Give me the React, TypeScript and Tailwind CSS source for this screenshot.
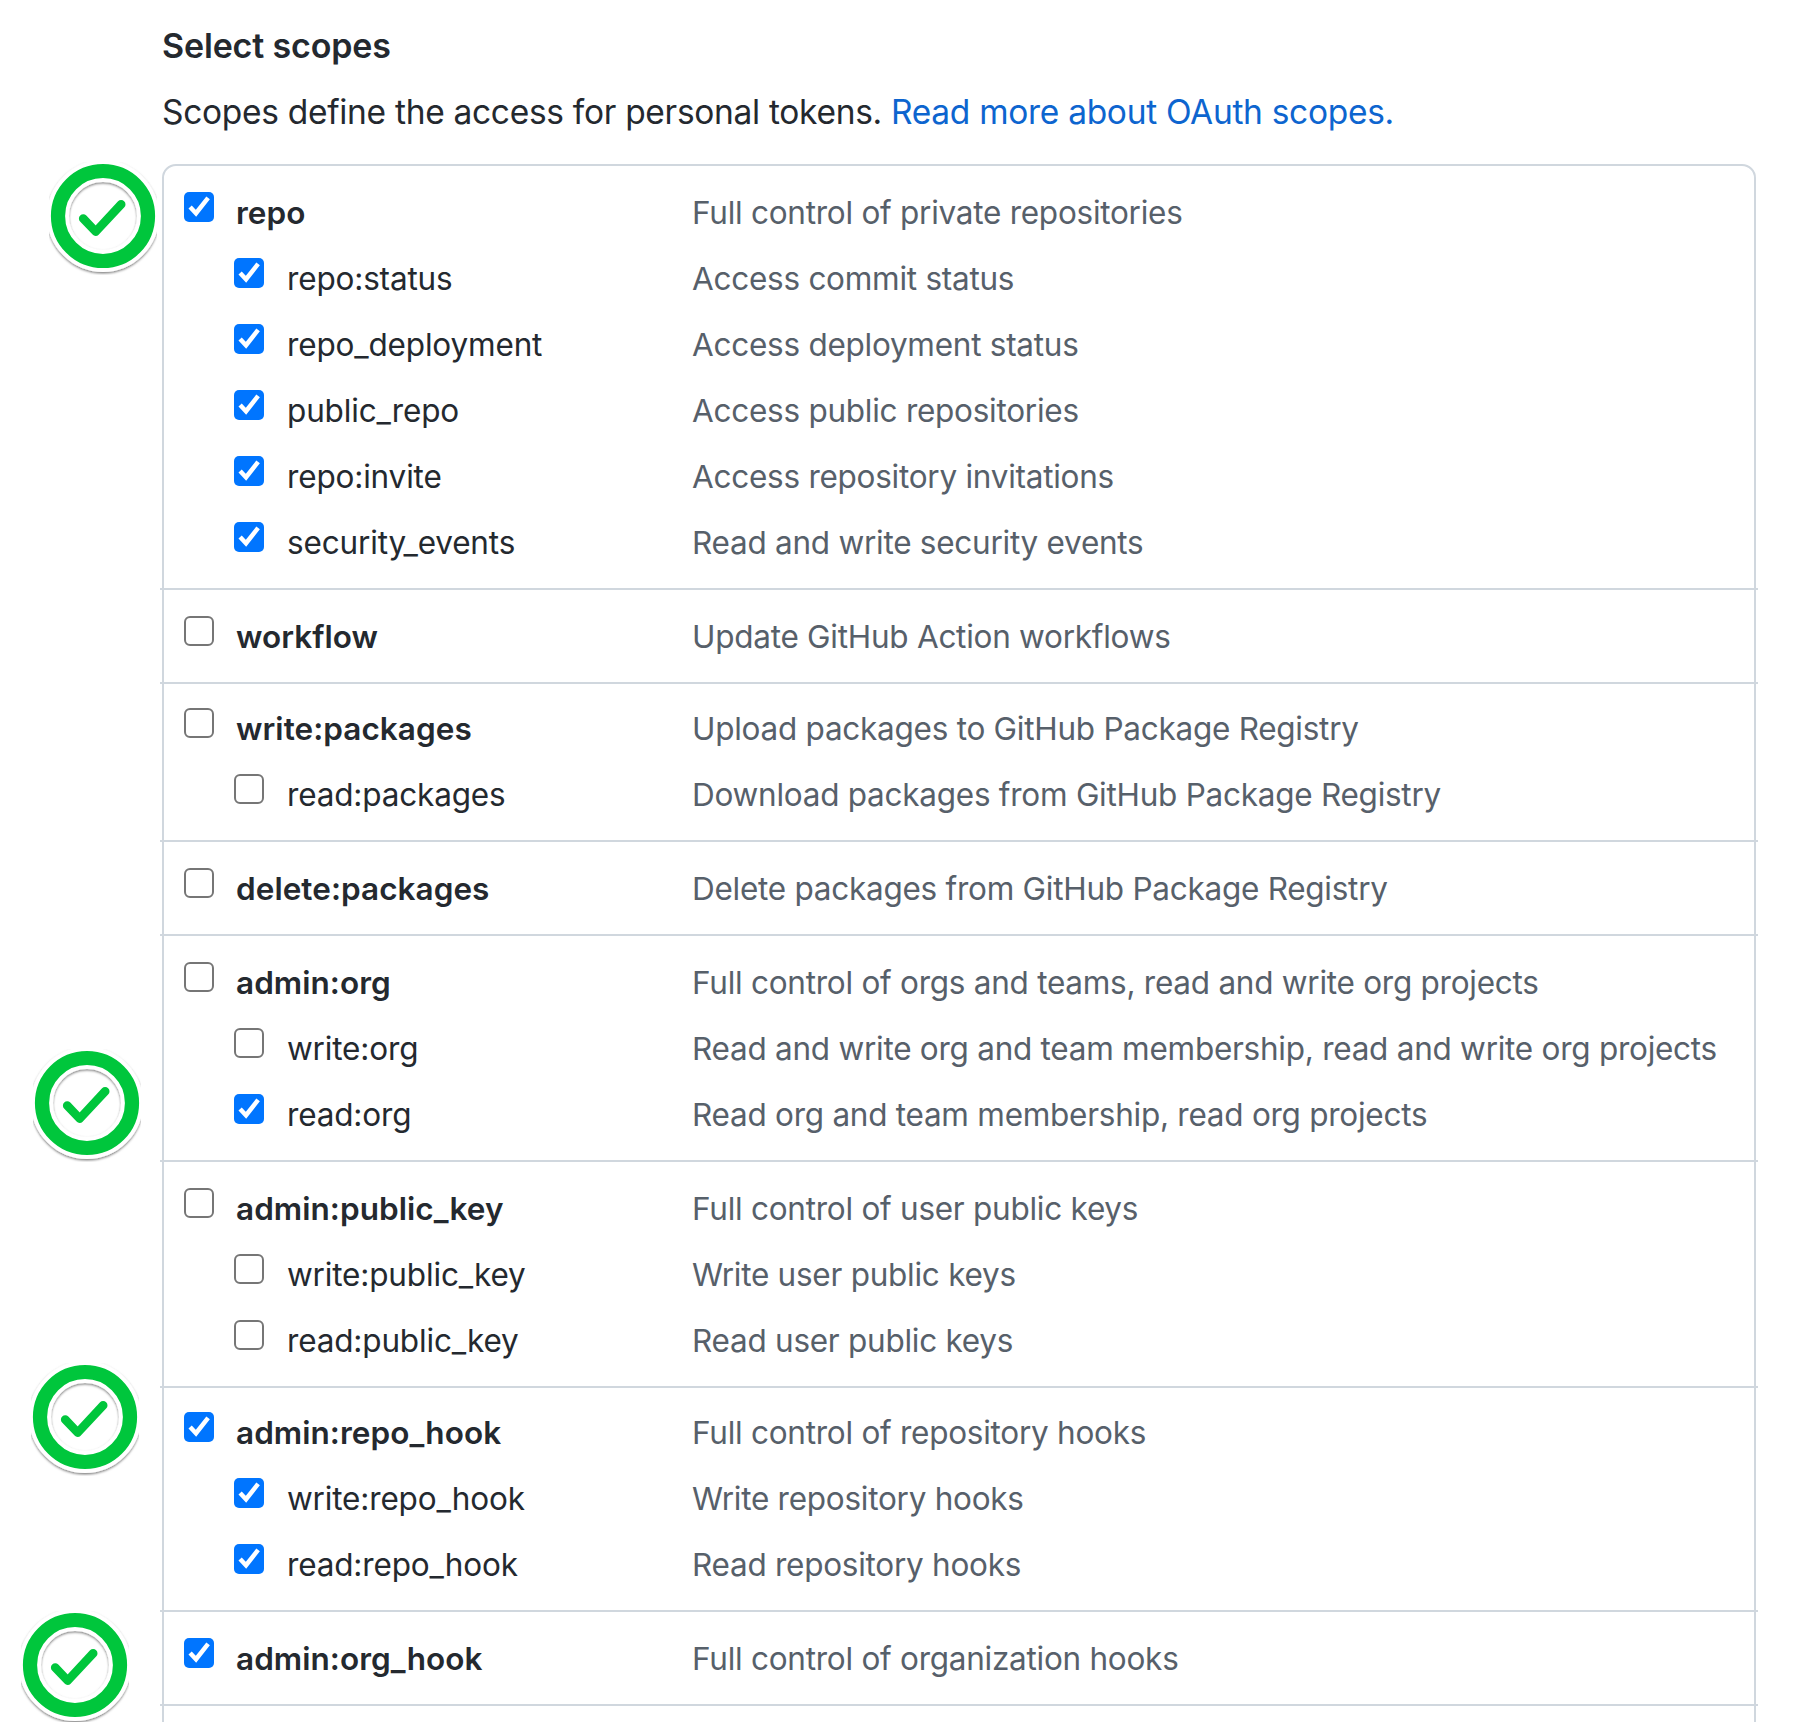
type Scope = { name: string; description: string; checked?: boolean };
type Group = { scopes: Scope[]; tight?: boolean };

const groups: Group[] = [
  {
    scopes: [
      { name: "repo", description: "Full control of private repositories", checked: true },
      { name: "repo:status", description: "Access commit status", checked: true },
      { name: "repo_deployment", description: "Access deployment status", checked: true },
      { name: "public_repo", description: "Access public repositories", checked: true },
      { name: "repo:invite", description: "Access repository invitations", checked: true },
      { name: "security_events", description: "Read and write security events", checked: true },
    ],
  },
  { scopes: [{ name: "workflow", description: "Update GitHub Action workflows" }] },
  {
    tight: true,
    scopes: [
      { name: "write:packages", description: "Upload packages to GitHub Package Registry" },
      { name: "read:packages", description: "Download packages from GitHub Package Registry" },
    ],
  },
  { scopes: [{ name: "delete:packages", description: "Delete packages from GitHub Package Registry" }] },
  {
    scopes: [
      { name: "admin:org", description: "Full control of orgs and teams, read and write org projects" },
      { name: "write:org", description: "Read and write org and team membership, read and write org projects" },
      { name: "read:org", description: "Read org and team membership, read org projects", checked: true },
    ],
  },
  {
    scopes: [
      { name: "admin:public_key", description: "Full control of user public keys" },
      { name: "write:public_key", description: "Write user public keys" },
      { name: "read:public_key", description: "Read user public keys" },
    ],
  },
  {
    tight: true,
    scopes: [
      { name: "admin:repo_hook", description: "Full control of repository hooks", checked: true },
      { name: "write:repo_hook", description: "Write repository hooks", checked: true },
      { name: "read:repo_hook", description: "Read repository hooks", checked: true },
    ],
  },
  { scopes: [{ name: "admin:org_hook", description: "Full control of organization hooks", checked: true }] },
];

function Checkbox({ checked }: { checked?: boolean }) {
  if (!checked) {
    return <span className="size-[30px] shrink-0 rounded-[6px] border-2 border-[#767676] bg-white" />;
  }
  return (
    <span className="size-[30px] shrink-0 rounded-[5px] bg-[#0075ff]">
      <svg viewBox="0 0 30 30" className="size-full" fill="none" stroke="#fff" strokeWidth="4.5">
        <path d="M6.1 15 12 21.2 24.1 5.9" />
      </svg>
    </span>
  );
}

function ScopeRow({ scope, parent }: { scope: Scope; parent: boolean }) {
  return (
    <label className="flex h-[66px] items-start leading-[42px]">
      <span className={parent ? "flex w-[508px] pl-0" : "flex w-[508px] pl-[50px]"}>
        <Checkbox checked={scope.checked} />
        <span className={parent ? "ml-[22px] font-semibold tracking-[0.05px]" : "ml-[23px] tracking-[-0.16px]"}>
          {scope.name}
        </span>
      </span>
      <span className="tracking-[-0.26px] whitespace-nowrap text-[#57606a]">{scope.description}</span>
    </label>
  );
}

function Badge({ className }: { className: string }) {
  return (
    <svg viewBox="0 0 120 124" className={`absolute h-[124px] w-[120px] ${className}`} fill="none">
      <defs>
        <filter id="badge-shadow" x="-10%" y="-10%" width="120%" height="125%">
          <feDropShadow dx="0" dy="1.4" stdDeviation="1.3" floodColor="#000" floodOpacity="0.5" />
        </filter>
      </defs>
      <circle cx="60" cy="60" r="45" stroke="#fff" strokeWidth="22" filter="url(#badge-shadow)" />
      <circle cx="60" cy="60" r="45" stroke="#00c63c" strokeWidth="14.2" />
      <path
        d="M40.2 62.5 52.7 75.6 78.2 48.3"
        stroke="#00c63c"
        strokeWidth="8.6"
        strokeLinecap="round"
        strokeLinejoin="round"
      />
    </svg>
  );
}

export default function App() {
  return (
    <main className="relative h-[1722px] w-[1810px] overflow-hidden bg-white pt-[26px] pl-[162px] font-['Inter',sans-serif] text-[31.5px] text-[#24292f]">
      <h1 className="h-[66px] text-[34px] leading-[40px] font-semibold tracking-[-0.15px]">Select scopes</h1>
      <p className="h-[72px] text-[33.5px] leading-[40px] tracking-[-0.3px] whitespace-nowrap">
        Scopes define the access for personal tokens.{" "}
        <a href="#" className="text-[#0d65cf]">
          Read more about OAuth scopes.
        </a>
      </p>
      <section className="h-[1600px] w-[1594px] rounded-t-[14px] border-2 border-[#d0d7de]">
        {groups.map((group, i) => (
          <div
            key={group.scopes[0].name}
            className={`-mx-1 pl-6 ${i > 0 ? "border-t-2 border-[#d0d7de]" : ""} ${group.tight ? "pt-6" : "pt-[26px]"}`}
          >
            {group.scopes.map((scope, j) => (
              <ScopeRow key={scope.name} scope={scope} parent={j === 0} />
            ))}
          </div>
        ))}
        <div className="-mx-1 border-t-2 border-[#d0d7de]" />
      </section>
      <Badge className="top-[156px] left-[43px]" />
      <Badge className="top-[1043px] left-[27px]" />
      <Badge className="top-[1357px] left-[25px]" />
      <Badge className="top-[1605px] left-[15px]" />
    </main>
  );
}
